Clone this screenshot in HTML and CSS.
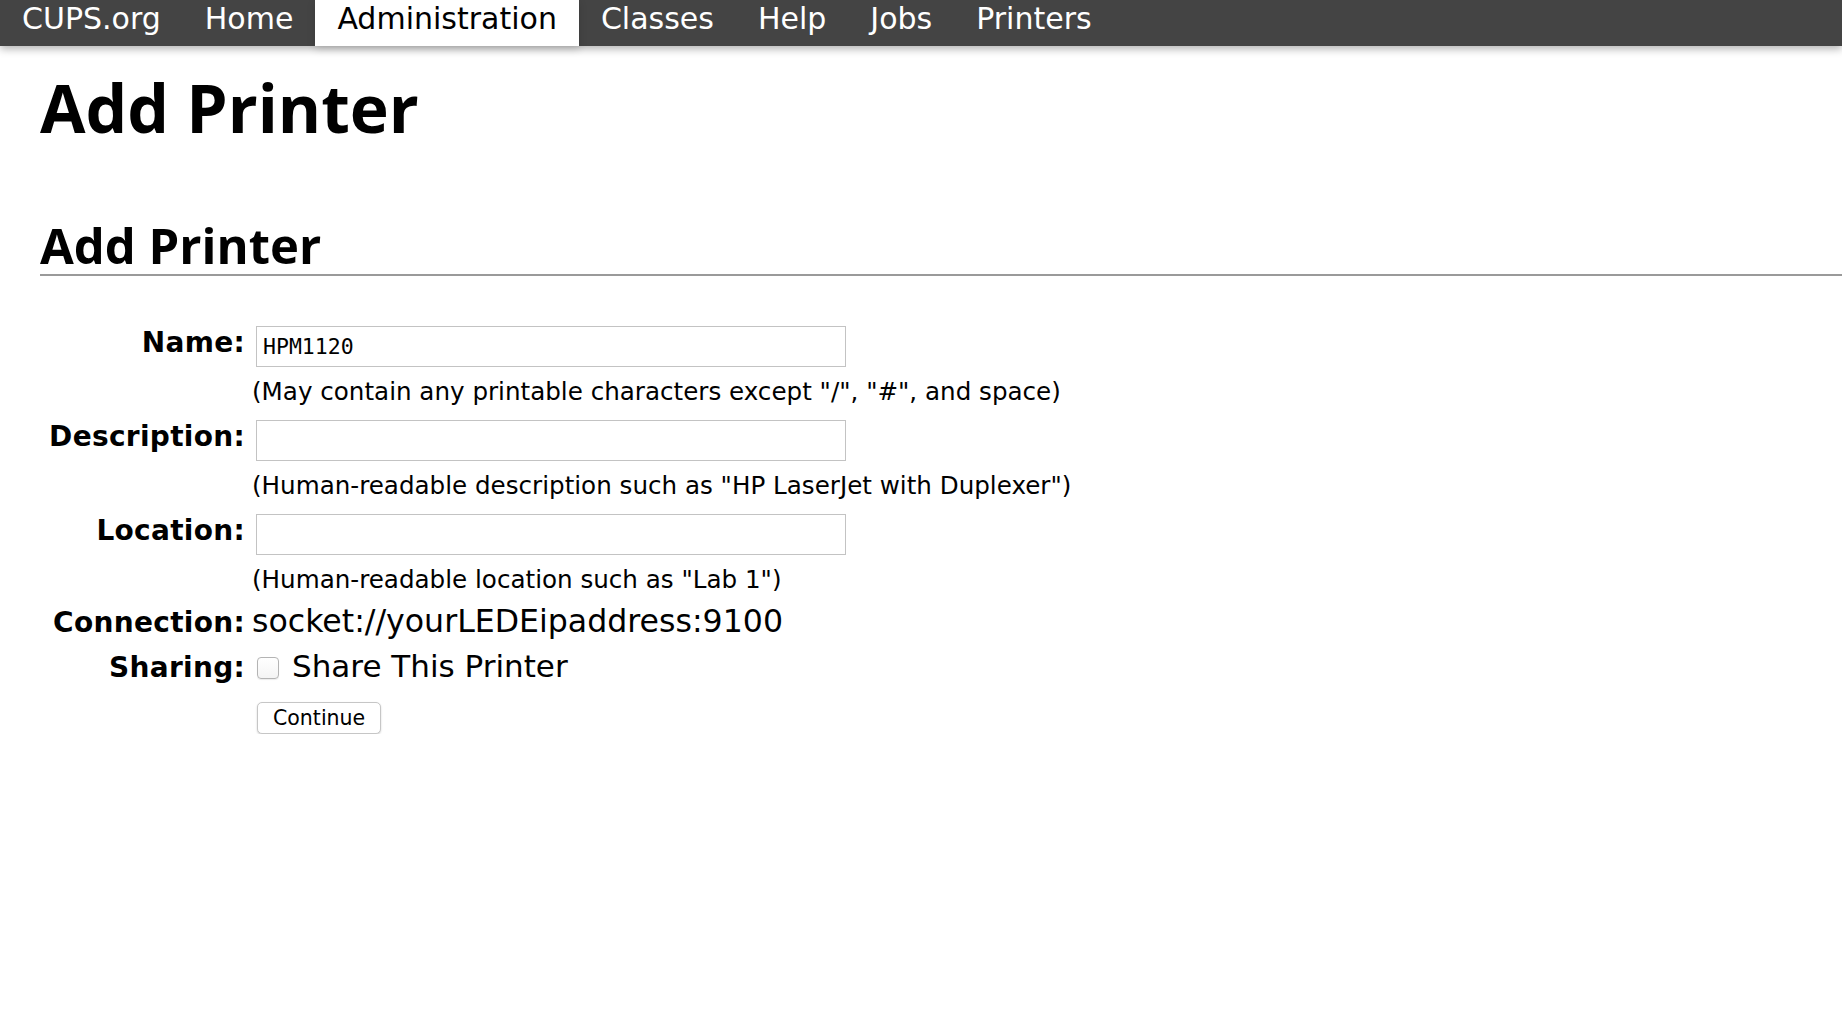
FILE: index.html
```html
<!DOCTYPE html>
<html lang="en">
<head>
<meta charset="utf-8">
<title>Add Printer - CUPS</title>
<link rel="stylesheet" href="styles.css">
</head>
<body>
<nav class="header">
  <a class="nav-item" href="#">CUPS.org</a>
  <a class="nav-item" href="#">Home</a>
  <a class="nav-item active" href="#">Administration</a>
  <a class="nav-item" href="#">Classes</a>
  <a class="nav-item" href="#">Help</a>
  <a class="nav-item" href="#">Jobs</a>
  <a class="nav-item" href="#">Printers</a>
</nav>
<main class="body">
  <h1 class="title">Add Printer</h1>
  <h2 class="subtitle">Add Printer</h2>
  <form class="form">
    <div class="row row-field">
      <div class="label">Name:</div>
      <div class="value">
        <input class="text-input" type="text" value="HPM1120">
        <div class="hint">(May contain any printable characters except "/", "#", and space)</div>
      </div>
    </div>
    <div class="row row-field">
      <div class="label">Description:</div>
      <div class="value">
        <input class="text-input" type="text" value="">
        <div class="hint">(Human-readable description such as "HP LaserJet with Duplexer")</div>
      </div>
    </div>
    <div class="row row-field">
      <div class="label">Location:</div>
      <div class="value">
        <input class="text-input" type="text" value="">
        <div class="hint">(Human-readable location such as "Lab 1")</div>
      </div>
    </div>
    <div class="row row-inline row-connection">
      <div class="label">Connection:</div>
      <div class="value plain">socket://yourLEDEipaddress:9100</div>
    </div>
    <div class="row row-inline row-sharing">
      <div class="label">Sharing:</div>
      <div class="value plain"><input class="check" type="checkbox">Share This Printer</div>
    </div>
    <div class="row row-submit">
      <div class="label"></div>
      <div class="value"><button class="button" type="button">Continue</button></div>
    </div>
  </form>
</main>
</body>
</html>
```
FILE: styles.css
```css
html, body {
  margin: 0;
  padding: 0;
  background: #ffffff;
}

body {
  font-family: "DejaVu Sans", "Liberation Sans", sans-serif;
  color: #000000;
}

.header {
  display: flex;
  height: 46px;
  background: #444444;
  box-shadow: 0 3px 8px rgba(0, 0, 0, 0.3);
  position: relative;
  z-index: 1;
}

.nav-item {
  display: block;
  padding: 0 22px 10px;
  font-size: 30px;
  line-height: 37px;
  color: #ffffff;
  text-decoration: none;
}

.nav-item.active {
  background: #ffffff;
  color: #000000;
  box-shadow: 0 3px 8px rgba(0, 0, 0, 0.15);
}

.body {
  padding: 26px 0 0 40px;
}

.title {
  margin: 0;
  font-family: "Open Sans", "DejaVu Sans", sans-serif;
  font-weight: 700;
  font-size: 66px;
  line-height: 70px;
}

.subtitle {
  margin: 76px 0 0 0;
  padding-bottom: 2px;
  font-family: "Open Sans", "DejaVu Sans", sans-serif;
  font-weight: 700;
  font-size: 49px;
  line-height: 54px;
  border-bottom: 2px solid #9a9a9a;
}

.form {
  margin-top: 50px;
}

.row {
  display: flex;
  align-items: flex-start;
  gap: 7px;
}

.row-field + .row-field {
  margin-top: 11px;
}

.label {
  flex: 0 0 205px;
  text-align: right;
  font-weight: 700;
  font-size: 28px;
  line-height: 34px;
  letter-spacing: 0.3px;
}

.value {
  flex: 1 1 auto;
}

.text-input {
  display: block;
  box-sizing: border-box;
  width: 590px;
  height: 41px;
  margin: 0 0 0 4px;
  padding: 0 6px;
  border: 1px solid #c3c3c3;
  border-radius: 0;
  background: #ffffff;
  font-family: "DejaVu Sans Mono", "Liberation Mono", monospace;
  font-size: 21.5px;
  color: #000000;
  outline: none;
}

.hint {
  margin: 8px 0 0 0;
  font-size: 24.6px;
  line-height: 34px;
}

.row-inline {
  align-items: baseline;
}

.plain {
  font-size: 31px;
}

.row-connection .plain {
  font-size: 31.6px;
  line-height: 48px;
}

.row-sharing .plain {
  line-height: 42px;
}

.check {
  -webkit-appearance: none;
  appearance: none;
  box-sizing: border-box;
  width: 22px;
  height: 22px;
  margin: 0 13px 0 5px;
  vertical-align: middle;
  position: relative;
  top: -1px;
  border: 1px solid #b4b4b4;
  border-radius: 4px;
  background: linear-gradient(#ffffff, #f4f4f4);
  box-shadow: 0 1px 1px rgba(0, 0, 0, 0.08);
}

.row-submit {
  margin-top: 15px;
}

.button {
  box-sizing: border-box;
  height: 32px;
  margin-left: 5px;
  padding: 0 15px;
  border: 1px solid #c6c6c6;
  border-radius: 5px;
  background: #ffffff;
  box-shadow: 0 1px 2px rgba(0, 0, 0, 0.18);
  font-family: "DejaVu Sans", sans-serif;
  font-size: 20.5px;
  line-height: 30px;
  color: #000000;
}
```
